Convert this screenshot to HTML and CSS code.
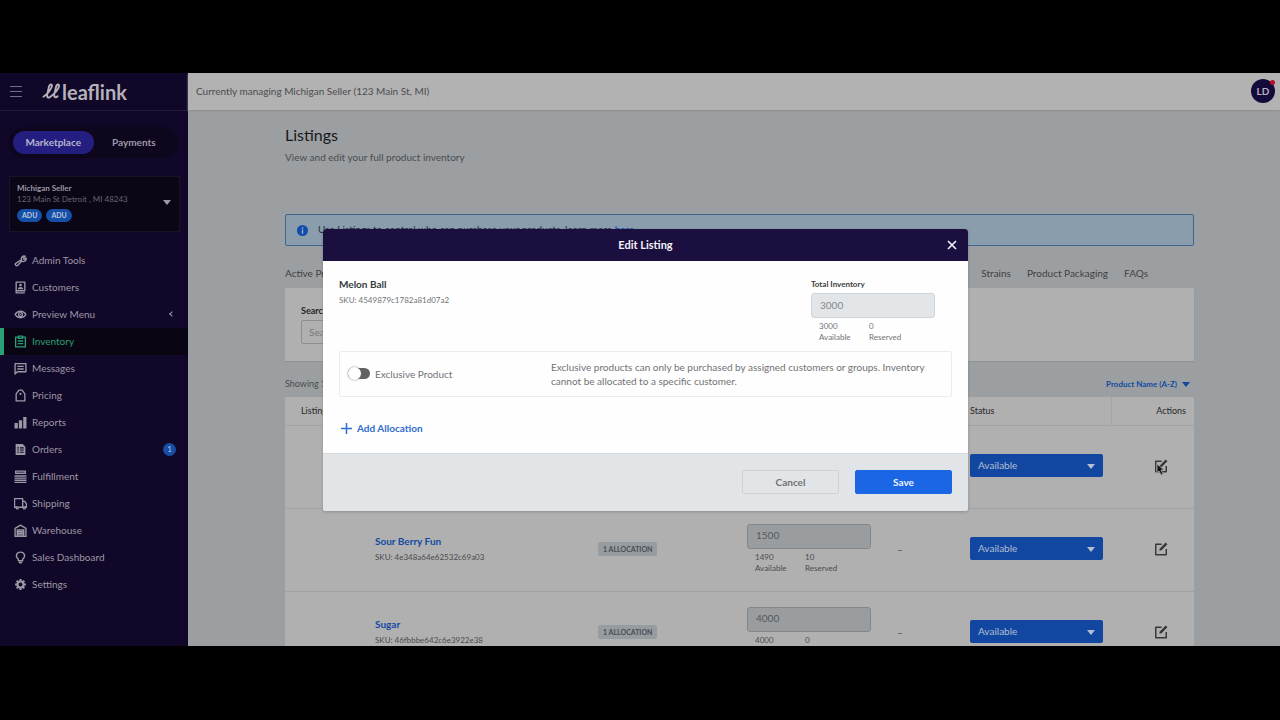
FILE: index.html
```html
<!DOCTYPE html>
<html lang="en">
<head>
  <meta charset="UTF-8" />
  <meta name="viewport" content="width=device-width, initial-scale=1.0"/>
  <title>LeafLink - Listings</title>
  <link rel="stylesheet" href="styles.css">
</head>
<body>
  <div class="app">
    <aside class="sidebar">
      <div class="brand">
        <button class="menu-btn" aria-label="Toggle menu"><span></span><span></span><span></span></button>
        <a href="#" class="logo">
          <svg width="19" height="17" viewBox="0 0 19 18" fill="none" stroke="currentColor" stroke-width="2" stroke-linecap="round" stroke-linejoin="round"><path d="M1 14.500C5 12 10 6 10 3C10 .8 7.500 1.200 6.800 4L5 12C4.400 15 6 16.400 8 14.800C12.500 11.500 17.500 6 17.500 3C17.500 .8 15 1.200 14.300 4L12.500 12C11.900 15 14 16 16 14"/></svg>
          <span>leaflink</span>
        </a>
      </div>

      <div class="switcher">
        <button class="switch active">Marketplace</button>
        <button class="switch">Payments</button>
      </div>

      <button class="account">
        <span class="account-info">
          <span class="account-name">Michigan Seller</span>
          <span class="account-address">123 Main St Detroit , MI 48243</span>
          <span class="account-tags"><span class="tag">ADU</span><span class="tag">ADU</span></span>
        </span>
        <span class="caret"></span>
      </button>

      <nav class="nav">
        <a href="#"><svg viewBox="0 0 24 24"><path class="line" d="M14 10.500a5 5 0 0 1 6.500-6.500l-3.200 3.200.6 2 2 .6L22 7a5 5 0 0 1-7.500 6L7 20.800a2.500 2.500 0 0 1-3.800-3.600z"/></svg>Admin Tools</a>
        <a href="#"><svg viewBox="0 0 24 24"><path class="line" d="M4 2h16v16H4zM4 18v4h16"/><circle cx="12" cy="7.500" r="2.500"/><path d="M7 15c0-5 10-5 10 0z"/></svg>Customers</a>
        <a href="#"><svg viewBox="0 0 24 24"><path class="line" d="M2 12c4.500-8 15.500-8 20 0-4.500 8-15.500 8-20 0z"/><circle class="line" cx="12" cy="12" r="3.500"/><circle cx="12" cy="12" r="1"/></svg>Preview Menu<span class="chevron"></span></a>
        <a href="#" class="active"><svg viewBox="0 0 24 24"><path class="line" d="M8 4H3v18h18V4h-5M8 2h8v4H8zM7 11h10M7 16h10"/></svg>Inventory</a>
        <a href="#"><svg viewBox="0 0 24 24"><path class="line" d="M2 22V3h20v15H6zM6 8h12M6 13h12"/></svg>Messages</a>
        <a href="#"><svg viewBox="0 0 24 24"><path class="line" d="M4 22V9l5-7h6l5 7v13z"/><circle cx="12" cy="9" r="2"/></svg>Pricing</a>
        <a href="#"><svg viewBox="0 0 24 24"><path d="M1 13h6v10H1zM9 8h6v15H9zM17 2h6v21h-6z"/></svg>Reports</a>
        <a href="#"><svg viewBox="0 0 24 24"><path fill-rule="evenodd" d="M3 2h13l5 5v15H3zM6 8v2h3V8zm5 0v2h7V8zm-5 4v2h3v-2zm5 0v2h7v-2zm-5 4v2h3v-2zm5 0v2h7v-2z"/></svg>Orders<span class="count">1</span></a>
        <a href="#"><svg viewBox="0 0 24 24"><path class="line" d="M3 2h18v4H3zM1 11h22M1 15h22M1 19h22M1 23h22"/></svg>Fulfillment</a>
        <a href="#"><svg viewBox="0 0 24 24"><path class="line" d="M4 19H1V3h15v16H9M16 8h4l3 5v6h-3"/><circle class="line" cx="6" cy="20" r="2"/><circle class="line" cx="19" cy="20" r="2"/></svg>Shipping</a>
        <a href="#"><svg viewBox="0 0 24 24"><path class="line" d="M2 23V8l10-6 10 6v15zM6 23V11h12v12M7 14h10M7 17h10M7 20h10"/></svg>Warehouse</a>
        <a href="#"><svg viewBox="0 0 24 24"><path class="line" d="M8 18v-3c-6-4-4-13 4-13s10 9 4 13v3z"/><path d="M8 20h8l-2 3h-4z"/></svg>Sales Dashboard</a>
        <a href="#"><svg viewBox="0 0 24 24"><circle class="gear" cx="12" cy="12" r="5.500"/><path class="teeth" d="M12 2v4M12 18v4M2 12h4M18 12h4M5 5l3 3M16 16l3 3M19 5l-3 3M8 16l-3 3"/></svg>Settings</a>
      </nav>
    </aside>

    <main class="main">
      <header class="topbar">
        <span>Currently managing Michigan Seller (123 Main St, MI)</span>
        <button class="avatar">LD<span class="dot"></span></button>
      </header>

      <section class="content">
        <h1>Listings</h1>
        <p class="subtitle">View and edit your full product inventory</p>

        <div class="notice">
          <svg width="11" height="11" viewBox="0 0 24 24"><circle cx="12" cy="12" r="12"/><path d="M10.500 5h3v3h-3zM10.500 10h3v9h-3z" fill="#9fb4c8"/></svg>
          <p>Use Listings to control who can purchase your products, learn more <a href="#">here</a></p>
        </div>

        <nav class="tabs">
          <a href="#">Active Products</a>
          <a href="#">Strains</a>
          <a href="#">Product Packaging</a>
          <a href="#">FAQs</a>
        </nav>

        <div class="search-card">
          <label for="search">Search</label>
          <input type="text" id="search" placeholder="Search">
        </div>

        <div class="list-bar">
          <span>Showing 1-3 of 3</span>
          <button class="sort">Product Name (A-Z)<span class="caret"></span></button>
        </div>

        <table class="listings">
          <colgroup>
            <col class="col-image"><col><col class="col-allocation"><col class="col-inventory"><col class="col-price"><col class="col-status"><col class="col-actions">
          </colgroup>
          <thead>
            <tr>
              <th colspan="2">Listing</th>
              <th></th>
              <th></th>
              <th></th>
              <th class="status-head">Status</th>
              <th class="actions-head">Actions</th>
            </tr>
          </thead>
          <tbody>
            <tr>
              <td></td>
              <td><a href="#" class="product">Melon Ball</a></td>
              <td></td>
              <td></td>
              <td>–</td>
              <td><div class="select-wrap"><select aria-label="Status of Melon Ball"><option>Available</option></select></div></td>
              <td>
                <button class="edit" aria-label="Edit Melon Ball">
                  <svg width="14" height="14" viewBox="0 0 24 24"><path class="line" d="M13 4H3v18h18V12"/><path d="M20 1l3 3-10 10-4 1 1-4z"/></svg>
                  <svg class="cursor" width="10" height="13" viewBox="0 0 10 13"><path d="M1 1v9l2-2 2 4 2-1-2-4h3z" fill="#111" stroke="#999" stroke-width="1"/></svg>
                </button>
              </td>
            </tr>
            <tr>
              <td></td>
              <td><a href="#" class="product">Sour Berry Fun</a><span class="sku">SKU: 4e348a64e62532c69a03</span></td>
              <td><span class="badge">1 ALLOCATION</span></td>
              <td>
                <input class="stock" type="text" value="1500" aria-label="Total inventory of Sour Berry Fun" disabled>
                <div class="stock-info"><span>1490<br>Available</span><span>10<br>Reserved</span></div>
              </td>
              <td>–</td>
              <td><div class="select-wrap"><select aria-label="Status of Sour Berry Fun"><option>Available</option></select></div></td>
              <td><button class="edit" aria-label="Edit Sour Berry Fun"><svg width="14" height="14" viewBox="0 0 24 24"><path class="line" d="M13 4H3v18h18V12"/><path d="M20 1l3 3-10 10-4 1 1-4z"/></svg></button></td>
            </tr>
            <tr>
              <td></td>
              <td><a href="#" class="product">Sugar</a><span class="sku">SKU: 46fbbbe642c6e3922e38</span></td>
              <td><span class="badge">1 ALLOCATION</span></td>
              <td>
                <input class="stock" type="text" value="4000" aria-label="Total inventory of Sugar" disabled>
                <div class="stock-info"><span>4000<br>Available</span><span>0<br>Reserved</span></div>
              </td>
              <td>–</td>
              <td><div class="select-wrap"><select aria-label="Status of Sugar"><option>Available</option></select></div></td>
              <td><button class="edit" aria-label="Edit Sugar"><svg width="14" height="14" viewBox="0 0 24 24"><path class="line" d="M13 4H3v18h18V12"/><path d="M20 1l3 3-10 10-4 1 1-4z"/></svg></button></td>
            </tr>
          </tbody>
        </table>
      </section>
    </main>

    <div class="modal-layer">
      <div class="modal" role="dialog" aria-labelledby="modalTitle">
        <div class="modal-header">
          <h2 id="modalTitle">Edit Listing</h2>
          <button class="close" aria-label="Close"><svg width="10" height="10" viewBox="0 0 10 10"><path d="M1 1l8 8M9 1L1 9" stroke="currentColor" stroke-width="1.600"/></svg></button>
        </div>
        <div class="modal-body">
          <div class="modal-top">
            <div>
              <h3>Melon Ball</h3>
              <span class="sku">SKU: 4549879c1782a81d07a2</span>
            </div>
            <div class="total">
              <label for="total">Total Inventory</label>
              <input class="stock" type="text" id="total" value="3000" disabled>
              <div class="stock-info"><span>3000<br>Available</span><span>0<br>Reserved</span></div>
            </div>
          </div>
          <div class="exclusive">
            <label class="toggle"><input type="checkbox"><span class="track"></span>Exclusive Product</label>
            <p>Exclusive products can only be purchased by assigned customers or groups. Inventory cannot be allocated to a specific customer.</p>
          </div>
          <button class="add"><svg width="11" height="11" viewBox="0 0 11 11"><path d="M5.500 0v11M0 5.500h11" stroke="currentColor" stroke-width="1.500"/></svg>Add Allocation</button>
        </div>
        <div class="modal-footer">
          <button class="btn">Cancel</button>
          <button class="btn btn-primary">Save</button>
        </div>
      </div>
    </div>
  </div>
</body>
</html>
```
FILE: styles.css
```css
* {
  box-sizing: border-box;
}

body {
  margin: 0;
  height: 100vh;
  padding: 73px 0 74px;
  background-color: #000;
  font-family: Lato, sans-serif;
  font-size: 10px;
  line-height: 14px;
  color: #4a4c4f;
}

h1, h2, h3, p {
  margin: 0;
}

a {
  color: inherit;
  text-decoration: none;
}

button {
  margin: 0;
  padding: 0;
  border: none;
  background: none;
  font: inherit;
  color: inherit;
}

input, select {
  font: inherit;
}

.app {
  position: relative;
  display: flex;
  height: 100%;
  overflow: hidden;
}

.caret {
  border: 4px solid transparent;
  border-top: 5px solid currentColor;
  border-bottom: none;
}

/* sidebar */
.sidebar {
  flex: 0 0 188px;
  background-color: #110728;
  color: #9d98a6;
}

.brand {
  display: flex;
  align-items: center;
  gap: 20px;
  height: 38px;
  padding-left: 10px;
  border-bottom: 1px solid #221936;
}

.menu-btn {
  display: flex;
  flex-direction: column;
  gap: 4px;
}

.menu-btn span {
  width: 12px;
  height: 1px;
  background-color: #77727f;
}

.logo {
  display: flex;
  align-items: center;
  gap: 1px;
  font-size: 20px;
  line-height: 24px;
  font-weight: 700;
  color: #b5b2ba;
}

.switcher {
  display: flex;
  margin: 16px 10px 0 9px;
  padding: 4px;
  border-radius: 16px;
  background-color: #0d061c;
}

.switch {
  flex: 1;
  height: 23px;
  padding-bottom: 1px;
  border-radius: 12px;
  font-weight: 700;
}

.switch.active {
  background-color: #231e80;
  color: #b7b5cf;
}

.account {
  display: flex;
  align-items: center;
  justify-content: space-between;
  width: 171px;
  height: 56px;
  margin: 18px 0 0 9px;
  padding: 0 8px 3px 7px;
  border: 1px solid #1a1229;
  background-color: #0a0615;
  font-size: 8px;
  line-height: 11px;
  text-align: left;
}

.account-info {
  display: flex;
  flex-direction: column;
}

.account-name {
  font-weight: 700;
}

.account-address {
  color: #696571;
}

.account-tags {
  display: flex;
  gap: 4px;
  margin-top: 4px;
}

.tag {
  padding: 1px 5px;
  border-radius: 7px;
  background-color: #1550a8;
  font-size: 7px;
  font-weight: 700;
  color: #b9c6dc;
}

.nav {
  margin-top: 15px;
}

.nav a {
  display: flex;
  align-items: center;
  gap: 5px;
  height: 27px;
  padding: 0 12px 1px 10px;
  border-left: 4px solid transparent;
}

.nav a.active {
  border-left-color: #2b9f75;
  background-color: #090512;
  color: #2b9f75;
}

.nav svg {
  width: 13px;
  height: 13px;
  fill: currentColor;
}

.nav .line, .edit .line {
  fill: none;
  stroke: currentColor;
  stroke-width: 2.5px;
  stroke-linejoin: round;
}

.nav .gear {
  fill: none;
  stroke: currentColor;
  stroke-width: 4px;
}

.nav .teeth {
  stroke: currentColor;
  stroke-width: 4px;
}

.chevron {
  width: 4px;
  height: 4px;
  margin: 0 2px 0 auto;
  border-left: 1px solid currentColor;
  border-bottom: 1px solid currentColor;
  transform: rotate(45deg);
}

.count {
  width: 13px;
  height: 13px;
  margin-left: auto;
  border-radius: 50%;
  background-color: #164ea5;
  font-size: 8px;
  line-height: 13px;
  text-align: center;
  color: #b9c6dc;
}

/* page */
.main {
  flex: 1;
  min-width: 0;
  background-color: #9b9fa1;
}

.topbar {
  display: flex;
  align-items: center;
  justify-content: space-between;
  height: 37px;
  padding: 0 5px 2px 8px;
  background-color: #b2b2b2;
  box-shadow: 0 1px 2px #8d9092;
}

.avatar {
  position: relative;
  width: 24px;
  height: 24px;
  border-radius: 50%;
  background-color: #150b3a;
  font-weight: 700;
  color: #b5b2c0;
}

.dot {
  position: absolute;
  top: 1px;
  right: 0;
  width: 5px;
  height: 5px;
  border-radius: 50%;
  background-color: #b80f26;
}

.content {
  padding: 16px 86px 0 97px;
}

.content h1 {
  font-size: 16px;
  line-height: 18px;
  font-weight: 400;
  color: #17191b;
}

.subtitle {
  margin-top: 6px;
}

.notice {
  display: flex;
  align-items: center;
  gap: 10px;
  height: 32px;
  margin-top: 50px;
  padding: 0 11px;
  border: 1px solid #42658f;
  border-radius: 2px;
  background-color: #8a9dac;
  color: #23303b;
}

.notice p {
  padding-bottom: 2px;
}

.notice svg {
  fill: #114cab;
}

.notice a {
  color: #114cab;
}

.tabs {
  display: flex;
  gap: 16px;
  height: 42px;
  padding: 20px 46px 0 0;
  color: #3f4143;
}

.tabs a:first-child {
  margin-right: auto;
}

.search-card {
  height: 73px;
  padding: 16px;
  background-color: #b0b0b0;
  box-shadow: 0 1px 1px #929597;
}

.search-card label {
  display: block;
  font-size: 9px;
  font-weight: 700;
  color: #242628;
}

.search-card input {
  width: 160px;
  height: 24px;
  margin-top: 2px;
  padding: 0 7px;
  border: 1px solid #8d8f91;
  border-radius: 2px;
  background: transparent;
}

.search-card input::placeholder {
  color: #77797b;
}

.list-bar {
  display: flex;
  align-items: center;
  justify-content: space-between;
  height: 36px;
  padding: 10px 4px 0 0;
  font-size: 9px;
}

.sort {
  display: flex;
  align-items: center;
  gap: 5px;
  font-size: 8px;
  font-weight: 700;
  color: #124aa2;
}

.listings {
  width: 100%;
  table-layout: fixed;
  border-collapse: collapse;
  background-color: #b0b0b0;
}

.col-image { width: 90px; }
.col-allocation { width: 149px; }
.col-inventory { width: 150px; }
.col-price { width: 73px; }
.col-status { width: 141px; }
.col-actions { width: 83px; }

.listings th {
  height: 28px;
  padding: 0 16px;
  border-bottom: 1px solid #a3a4a5;
  font-size: 9px;
  font-weight: 400;
  text-align: left;
  color: #26282a;
}

.listings .status-head {
  padding-left: 0;
  border-right: 1px solid #a3a4a5;
}

.listings .actions-head {
  padding-right: 8px;
  text-align: right;
}

.listings td {
  height: 83px;
  padding: 0 0 2px;
  border-bottom: 1px solid #a0a1a2;
}

.product {
  display: block;
  margin-bottom: 2px;
  font-weight: 700;
  color: #124aa2;
}

.sku {
  display: block;
  font-size: 8px;
}

.badge {
  display: inline-block;
  padding: 0 5px;
  border-radius: 2px;
  background-color: #979ca1;
  font-size: 7px;
  font-weight: 700;
}

.stock {
  display: block;
  width: 124px;
  height: 25px;
  padding: 0 8px 2px;
  border: 1px solid #83878a;
  border-radius: 3px;
  background-color: #999da0;
  color: #56595c;
}

.stock-info {
  display: flex;
  margin: 3px 0 0 8px;
  font-size: 8px;
  line-height: 11px;
}

.stock-info span {
  width: 50px;
}

.select-wrap {
  position: relative;
  width: 133px;
}

.select-wrap select {
  display: block;
  appearance: none;
  width: 100%;
  height: 23px;
  padding: 0 8px 1px;
  border: none;
  border-radius: 2px;
  background-color: #1147a0;
  color: #b3bfd3;
}

.select-wrap::after {
  content: "";
  position: absolute;
  top: 10px;
  right: 8px;
  border: 4px solid transparent;
  border-top: 5px solid #b3bfd3;
  border-bottom: none;
}

.edit {
  position: relative;
  display: block;
  margin-left: 43px;
  color: #35373a;
}

.edit svg {
  display: block;
  fill: currentColor;
}

.edit .cursor {
  position: absolute;
  top: 4px;
  left: 2px;
}

/* edit listing modal */
.modal-layer {
  position: absolute;
  inset: 0;
  display: flex;
  align-items: flex-start;
  justify-content: center;
  padding: 156px 0 0 11px;
}

.modal {
  width: 645px;
  border-radius: 3px;
  background-color: #fefefe;
  color: #707376;
  overflow: hidden;
  box-shadow: 0 1px 3px rgba(0,0,0,0.2);
}

.modal-header {
  display: flex;
  align-items: center;
  height: 32px;
  padding: 0 11px;
  background-color: #1b0f40;
  color: #f4f2f8;
}

.modal-header h2 {
  flex: 1;
  padding: 0 0 1px 10px;
  font-size: 11px;
  font-weight: 700;
  text-align: center;
}

.close svg {
  display: block;
}

.modal-body {
  height: 192px;
  padding: 16px;
}

.modal-top {
  display: flex;
  justify-content: space-between;
  height: 74px;
}

.modal-top h3 {
  margin-bottom: 2px;
  font-size: 10px;
  font-weight: 700;
  color: #3a3d40;
}

.total {
  width: 141px;
}

.total label {
  display: block;
  margin-bottom: 2px;
  font-size: 8px;
  font-weight: 700;
  color: #3a3d40;
}

.total .stock {
  border-color: #d0d4d8;
  background-color: #e2e6e9;
  color: #85888b;
}

.exclusive {
  display: flex;
  align-items: center;
  height: 46px;
  padding: 0 24px 1px 8px;
  border: 1px solid #ececee;
  border-radius: 2px;
}

.toggle {
  display: flex;
  align-items: center;
  gap: 5px;
  width: 203px;
}

.toggle input {
  position: absolute;
  opacity: 0;
}

.track {
  display: flex;
  align-items: center;
  width: 22px;
  height: 11px;
  border-radius: 6px;
  background-color: #626262;
}

.track::before {
  content: "";
  flex: 0 0 13px;
  height: 13px;
  border-radius: 50%;
  background-color: #fff;
  box-shadow: 0 0 2px #777;
}

.exclusive p {
  flex: 1;
}

.add {
  display: flex;
  align-items: center;
  gap: 5px;
  margin: 24px 0 0 2px;
  font-weight: 700;
  color: #2f6dd0;
}

.modal-footer {
  display: flex;
  justify-content: flex-end;
  gap: 16px;
  height: 58px;
  padding: 16px;
  border-top: 1px solid #d6dadd;
  background-color: #e1e5e8;
}

.btn {
  width: 97px;
  height: 24px;
  padding-bottom: 1px;
  border: 1px solid #d0d3d6;
  border-radius: 2px;
  font-weight: 700;
}

.btn-primary {
  border-color: #1b66e5;
  background-color: #1b66e5;
  color: #eef4ff;
}
```
